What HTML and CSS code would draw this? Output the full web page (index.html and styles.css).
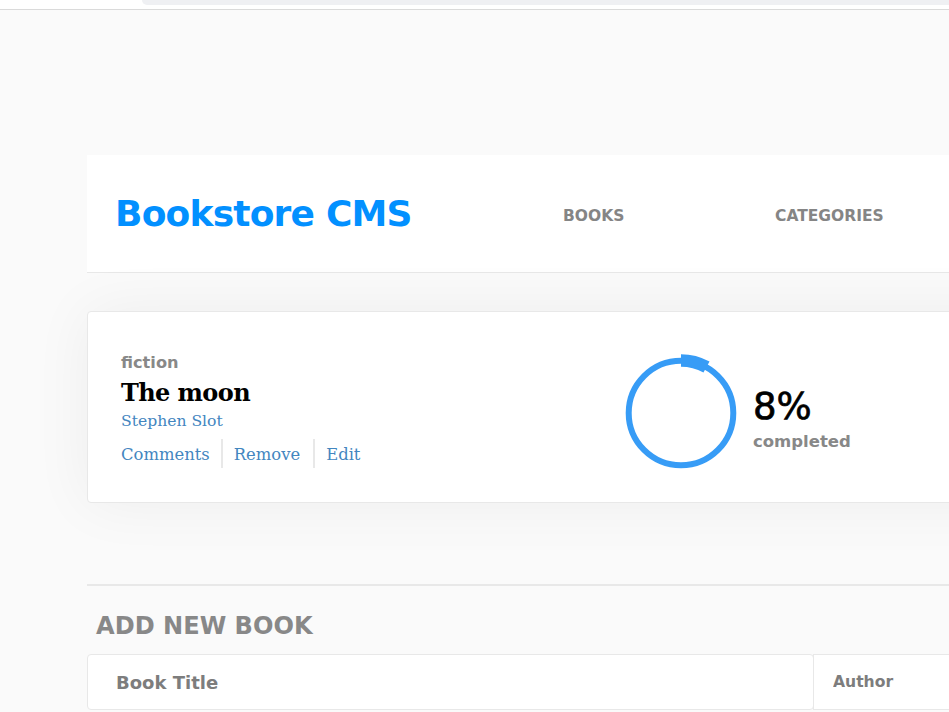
FILE: index.html
```html
<!DOCTYPE html>
<html lang="en">
<head>
<meta charset="utf-8">
<title>Bookstore CMS</title>
<link rel="stylesheet" href="styles.css">
</head>
<body>
<div class="topbar"><div class="topbar-pill"></div></div>
<div class="page">
  <header class="header">
    <h1 class="logo">Bookstore CMS</h1>
    <nav class="nav">
      <a class="nav-link nav-books" href="#">BOOKS</a>
      <a class="nav-link" href="#">CATEGORIES</a>
    </nav>
  </header>

  <section class="card">
    <div class="book-info">
      <p class="genre">fiction</p>
      <h2 class="title">The moon</h2>
      <p class="author">Stephen Slot</p>
      <div class="actions">
        <a class="action action-first" href="#">Comments</a>
        <a class="action action-mid" href="#">Remove</a>
        <a class="action action-last" href="#">Edit</a>
      </div>
    </div>
    <svg class="ring" width="120" height="120" viewBox="0 0 120 120">
      <circle cx="60" cy="60" r="52.3" fill="none" stroke="#379cf6" stroke-width="6"/>
      <path d="M60 7.4 A52.6 52.6 0 0 1 85.5 14" fill="none" stroke="#379cf6" stroke-width="12.5"/>
    </svg>
    <div class="progress-text">
      <p class="percent">8%</p>
      <p class="completed">completed</p>
    </div>
  </section>

  <hr class="divider">

  <h3 class="form-title">ADD NEW BOOK</h3>
  <form class="form">
    <input class="input input-title" type="text" placeholder="Book Title">
    <input class="input input-author" type="text" placeholder="Author">
  </form>
</div>
</body>
</html>
```
FILE: styles.css
```css
html, body {
  margin: 0;
  padding: 0;
  overflow: hidden;
  height: 100%;
}
body {
  background: #fafafa;
  font-family: "DejaVu Sans", sans-serif;
}
p, h1, h2, h3 { margin: 0; }

.topbar {
  height: 9px;
  background: #fff;
  border-bottom: 1px solid #dadada;
}
.topbar-pill {
  margin-left: 142px;
  height: 5px;
  background: #eff0f3;
  border-bottom-left-radius: 7px;
}

.page {
  width: 1300px;
  padding-left: 87px;
  padding-top: 145px;
}

.header {
  height: 117px;
  background: #fff;
  border-bottom: 1px solid #e8e8e8;
  display: flex;
  align-items: center;
  padding-left: 28px;
}
.logo {
  flex: 0 0 448px;
  font-size: 36px;
  font-weight: bold;
  letter-spacing: -0.8px;
  color: #0290ff;
  line-height: 44px;
}
.nav {
  display: flex;
  padding-top: 5px;
}
.nav-link {
  font-size: 15.5px;
  font-weight: bold;
  color: #858585;
  text-decoration: none;
}
.nav-books {
  width: 212px;
}

.card {
  margin-top: 38px;
  background: #fff;
  border: 1px solid #e8e8e8;
  border-radius: 4px;
  box-shadow: 0 0 60px rgba(0, 0, 0, 0.055);
  display: flex;
  align-items: flex-start;
  padding: 41px 0 0 33px;
  box-sizing: border-box;
  height: 192px;
}
.book-info {
  flex: 0 0 500px;
}
.genre {
  font-size: 16.2px;
  line-height: 20px;
  font-weight: bold;
  color: #888;
}
.title {
  margin-top: 5px;
  font-family: "DejaVu Serif", serif;
  font-size: 24px;
  line-height: 30px;
  font-weight: bold;
  color: #000;
  letter-spacing: -0.6px;
}
.author {
  margin-top: 2px;
  font-family: "DejaVu Serif", serif;
  font-size: 15.6px;
  line-height: 22px;
  color: #4386bf;
}
.actions {
  margin-top: 7px;
  display: flex;
  height: 29px;
}
.action {
  font-family: "DejaVu Serif", serif;
  font-size: 16.4px;
  line-height: 32px;
  color: #4386bf;
  text-decoration: none;
}
.action-first { padding-right: 11px; }
.action-mid {
  border-left: 2px solid #e8e8e8;
  padding: 0 13px 0 11px;
}
.action-last {
  border-left: 2px solid #e8e8e8;
  padding-left: 11px;
}

.ring {
  flex: 0 0 120px;
  display: block;
}
.progress-text {
  margin-left: 12px;
  padding-top: 32px;
}
.percent {
  font-size: 37px;
  line-height: 44px;
  color: #000;
  -webkit-text-stroke: 0.7px #000;
}
.completed {
  margin-top: 3px;
  font-size: 16.5px;
  line-height: 20px;
  font-weight: bold;
  color: #888;
}

.divider {
  margin: 81px 0 0 0;
  border: 0;
  height: 2px;
  background: #e8e8e8;
}

.form-title {
  margin: 25px 0 0 9px;
  font-size: 24.1px;
  line-height: 30px;
  font-weight: bold;
  color: #888;
}

.form {
  margin-top: 13px;
  display: flex;
}
.input {
  box-sizing: border-box;
  height: 56px;
  margin: 0;
  background: #fff;
  border: 1px solid #e8e8e8;
  border-radius: 4px;
  outline: none;
  font-family: "DejaVu Sans", sans-serif;
  font-weight: bold;
  color: #121212;
}
.input::placeholder { color: #7d7d7d; opacity: 1; }
.input-title {
  width: 727px;
  padding-left: 28px;
  font-size: 18px;
}
.input-author {
  width: 300px;
  margin-left: -1px;
  padding-left: 19px;
  font-size: 15.6px;
  border-radius: 0;
}
```
